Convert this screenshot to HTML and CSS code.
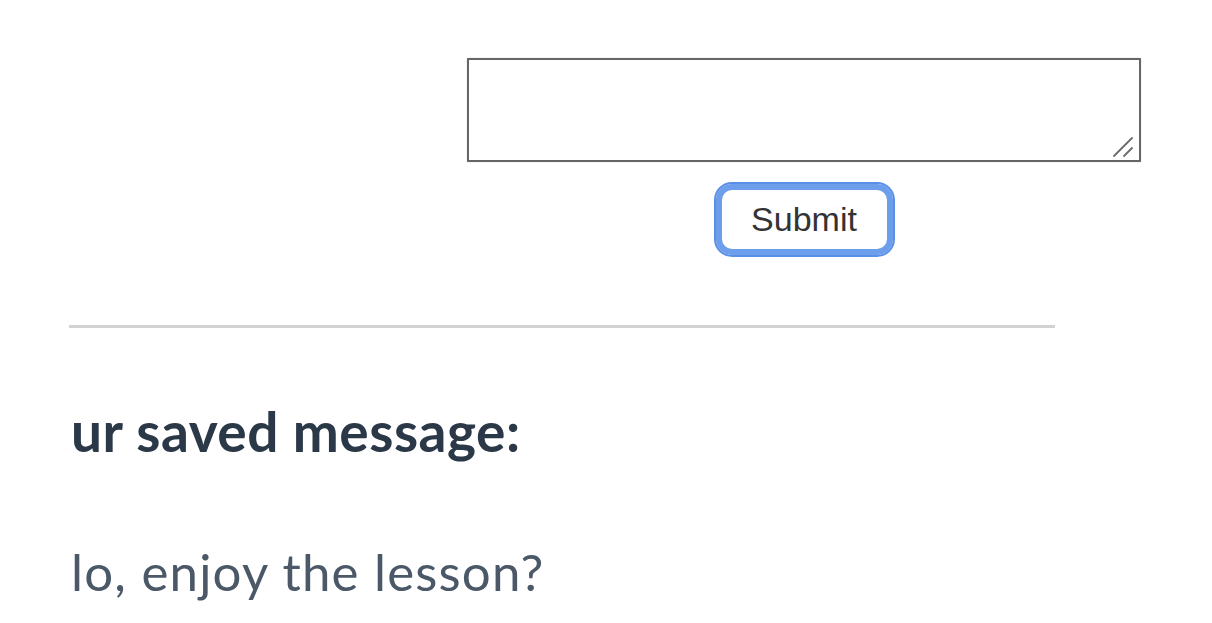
FILE: index.html
```html
<!DOCTYPE html>
<html lang="en">
<head>
<meta charset="utf-8">
<title>Saved message</title>
<link rel="stylesheet" href="styles.css">
</head>
<body>
<div class="page">
  <form class="form">
    <div class="field">
      <textarea class="input"></textarea>
      <svg class="grip" width="22" height="22" viewBox="0 0 22 22" aria-hidden="true">
        <line x1="2" y1="20" x2="20" y2="2" stroke="#6a6a6a" stroke-width="1.8" stroke-linecap="round"/>
        <line x1="12" y1="20" x2="20" y2="12" stroke="#6a6a6a" stroke-width="1.8" stroke-linecap="round"/>
      </svg>
    </div>
    <button type="button" class="submit">Submit</button>
  </form>
  <div class="saved">
    <hr class="rule">
    <h2 class="heading">ur saved message:</h2>
    <p class="message">lo, enjoy the lesson?</p>
  </div>
</div>
</body>
</html>
```

FILE: styles.css
```css
html, body {
  margin: 0;
  padding: 0;
  background: #ffffff;
  overflow: hidden;
}
.page {
  width: 1212px;
  height: 623px;
  padding-top: 58px;
  box-sizing: border-box;
}
.form {
  margin: 0 0 0 467px;
  width: 674px;
  display: flex;
  flex-direction: column;
  align-items: center;
}
.field {
  position: relative;
  width: 674px;
  height: 104px;
}
.input {
  display: block;
  width: 674px;
  height: 104px;
  box-sizing: border-box;
  border: 2px solid #666666;
  box-shadow: 0 0 1px #999;
  border-radius: 1px;
  margin: 0;
  padding: 4px;
  resize: none;
  background: #fff;
}
.grip {
  position: absolute;
  right: 7px;
  bottom: 4px;
}
.submit {
  margin-top: 20px;
  width: 181px;
  height: 75px;
  box-sizing: border-box;
  border: 2px solid #5a8fe6;
  border-radius: 18px;
  box-shadow: inset 0 0 0 6px #6d9eec;
  background: #fff;
  font-family: "Liberation Sans", Arial, sans-serif;
  font-size: 34px;
  color: #333333;
  padding: 0;
}
.saved {
  margin-left: 69px;
  width: 986px;
}
.rule {
  margin: 68px 0 0 0;
  border: 0;
  height: 3px;
  background: #d2d2d2;
}
.heading {
  margin: 70px 0 0 2px;
  font-family: Lato, "Noto Sans", sans-serif;
  font-weight: 700;
  font-size: 55px;
  line-height: 66px;
  letter-spacing: 0.5px;
  color: #2b3848;
  white-space: nowrap;
}
.message {
  margin: 77px 0 0 2px;
  font-family: Lato, "Noto Sans", sans-serif;
  font-weight: 400;
  font-size: 51px;
  line-height: 61px;
  letter-spacing: 1.2px;
  color: #4b5868;
  white-space: nowrap;
}
```
